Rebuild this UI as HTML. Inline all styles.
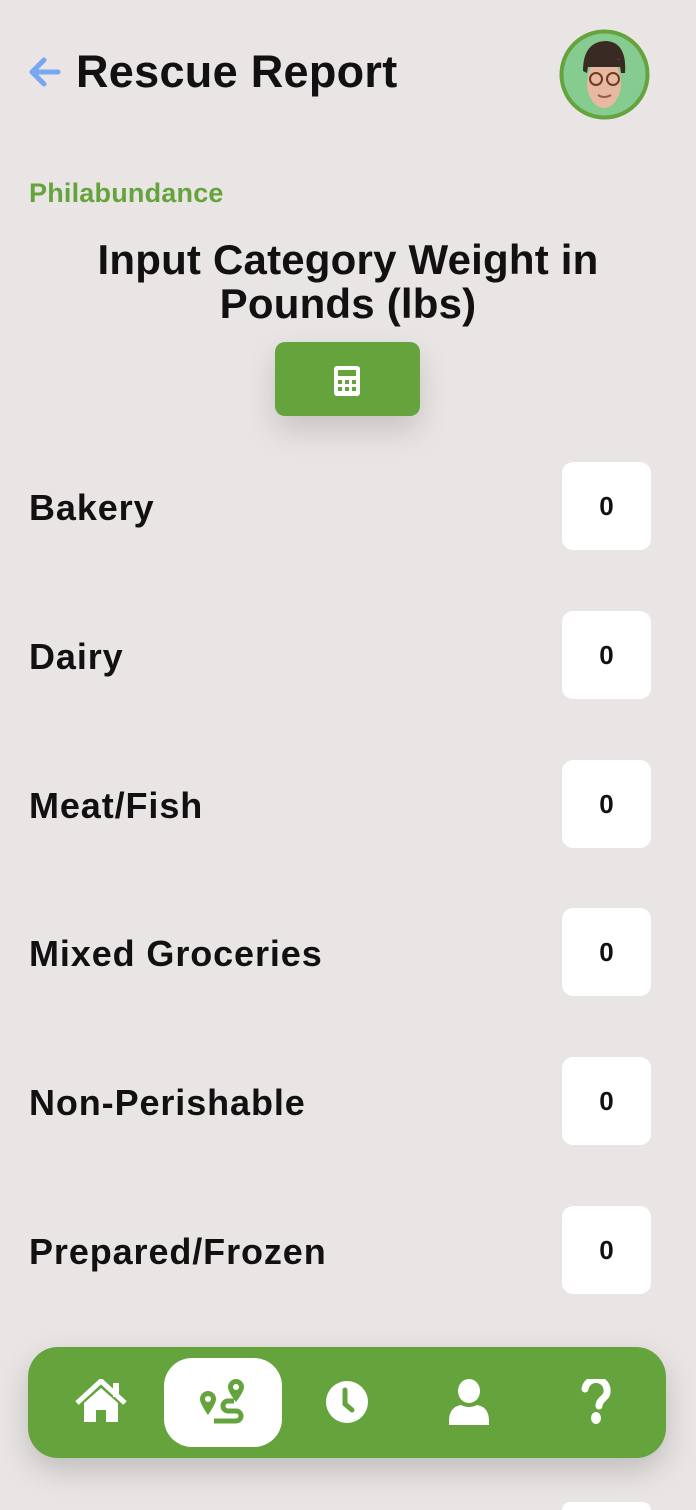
<!DOCTYPE html>
<html><head><style>
html,body{margin:0;width:696px;height:1510px;overflow:hidden}
body{background:#e9e5e4;font-family:"Liberation Sans",sans-serif;color:#111}
#w{position:relative;width:696px;height:1510px;overflow:hidden}
.abs{position:absolute}
h1{position:absolute;left:76px;top:44px;margin:0;font-size:45px;font-weight:bold;letter-spacing:0.3px;line-height:56px}
.row{position:absolute;left:29px;font-size:36px;font-weight:bold;letter-spacing:0.9px;line-height:40px}
.box{position:absolute;left:562px;width:89px;height:88px;background:#fff;border-radius:11px;font-size:26px;font-weight:bold;display:flex;align-items:center;justify-content:center}
</style></head><body><div id="w">
<svg class="abs" style="left:28px;top:56px" width="34" height="32" viewBox="0 0 34 32"><path d="M30 16H5M16 4L4 16l12 12" stroke="#76a7f0" stroke-width="5" fill="none" stroke-linecap="round" stroke-linejoin="round"/></svg>
<h1>Rescue Report</h1>
<svg class="abs" style="left:559px;top:29px" width="91" height="91" viewBox="0 0 91 91">
<circle cx="45.5" cy="45.5" r="43" fill="#86cb8f" stroke="#65a33d" stroke-width="4"/>
<path d="M24 42 Q24 12 48 12 Q68 14 66 44 L62 44 L60 30 L30 30 L28 44Z" fill="#3a2a24"/>
<ellipse cx="45" cy="54" rx="17" ry="25" fill="#e8b9a2"/>
<path d="M28 32 Q40 18 62 32 L62 38 L28 38Z" fill="#3a2a24"/>
<circle cx="37" cy="50" r="6" fill="none" stroke="#6b3b22" stroke-width="2"/><circle cx="54" cy="50" r="6" fill="none" stroke="#6b3b22" stroke-width="2"/>
<path d="M39 66 Q45 70 52 66" stroke="#9a5a50" stroke-width="2" fill="none"/>
</svg>
<div class="abs" style="left:29px;top:178px;color:#65a33d;font-size:27px;font-weight:bold;letter-spacing:0.2px">Philabundance</div>
<div class="abs" style="left:0;width:696px;top:238px;text-align:center;font-size:42px;font-weight:bold;line-height:44px;letter-spacing:0.2px">Input Category Weight in<br>Pounds (lbs)</div>
<div class="abs" style="left:275px;top:342px;width:145px;height:74px;background:#65a33d;border-radius:10px;box-shadow:0 14px 30px rgba(0,0,0,0.15)">
<svg class="abs" style="left:59px;top:24px" width="26" height="30" viewBox="0 0 26 30"><rect x="0" y="0" width="26" height="30" rx="3" fill="#fff"/><rect x="4" y="4" width="18" height="6" fill="#65a33d"/>
<g fill="#65a33d"><rect x="4" y="14" width="4" height="4"/><rect x="11" y="14" width="4" height="4"/><rect x="18" y="14" width="4" height="4"/><rect x="4" y="21" width="4" height="4"/><rect x="11" y="21" width="4" height="4"/><rect x="18" y="21" width="4" height="4"/></g></svg>
</div>
<div class="row" style="top:488px">Bakery</div><div class="box" style="top:462px">0</div>
<div class="row" style="top:637px">Dairy</div><div class="box" style="top:611px">0</div>
<div class="row" style="top:786px">Meat/Fish</div><div class="box" style="top:760px">0</div>
<div class="row" style="top:934px">Mixed Groceries</div><div class="box" style="top:908px">0</div>
<div class="row" style="top:1083px">Non-Perishable</div><div class="box" style="top:1057px">0</div>
<div class="row" style="top:1232px">Prepared/Frozen</div><div class="box" style="top:1206px">0</div>
<div class="abs" style="left:562px;top:1502px;width:89px;height:8px;background:#fff;border-radius:11px 11px 0 0"></div>
<div class="abs" style="left:28px;top:1347px;width:638px;height:111px;background:#65a33d;border-radius:30px;box-shadow:0 12px 30px rgba(0,0,0,0.18)">
<div class="abs" style="left:136px;top:11px;width:118px;height:89px;background:#fff;border-radius:28px"></div>
<svg class="abs" style="left:47px;top:32px" width="52" height="44" viewBox="0 0 52 44"><path d="M2 24L26 2l24 22" stroke="#fff" stroke-width="5" fill="none" stroke-linejoin="round"/><path d="M9 24L26 9l17 15v19H31V31h-10v12H9z" fill="#fff"/><rect x="38" y="4" width="6" height="14" fill="#fff"/></svg>
<svg class="abs" style="left:172px;top:32px" width="48" height="48" viewBox="0 0 48 48" fill="#65a33d"><path d="M8 12a8 8 0 0 1 8 8c0 5-8 16-8 16S0 25 0 20a8 8 0 0 1 8-8z M36 0a8 8 0 0 1 8 8c0 5-8 15-8 15S28 13 28 8a8 8 0 0 1 8-8z"/><circle cx="8" cy="20" r="3" fill="#fff"/><circle cx="36" cy="8" r="3" fill="#fff"/><path d="M34 22h-6a5 5 0 0 0 0 10h8a5 5 0 0 1 0 10H14" stroke="#65a33d" stroke-width="5" fill="none"/></svg>
<svg class="abs" style="left:297px;top:33px" width="44" height="44" viewBox="0 0 44 44"><circle cx="22" cy="22" r="21" fill="#fff"/><path d="M20 10v14l7 6" stroke="#65a33d" stroke-width="5" fill="none" stroke-linecap="round"/></svg>
<svg class="abs" style="left:421px;top:32px" width="40" height="46" viewBox="0 0 40 46" fill="#fff"><ellipse cx="20" cy="12" rx="11" ry="12"/><path d="M0 42q0-14 12-16q8 4 16 0q12 2 12 16v4H0z"/></svg>
<svg class="abs" style="left:552px;top:32px" width="32" height="46" viewBox="0 0 32 46"><path d="M5 10a11 11 0 0 1 22 3c0 6-8 7-8 14" stroke="#fff" stroke-width="7" fill="none" stroke-linecap="round"/><ellipse cx="16" cy="39" rx="5" ry="6" fill="#fff"/></svg>
</div>
</div></body></html>
